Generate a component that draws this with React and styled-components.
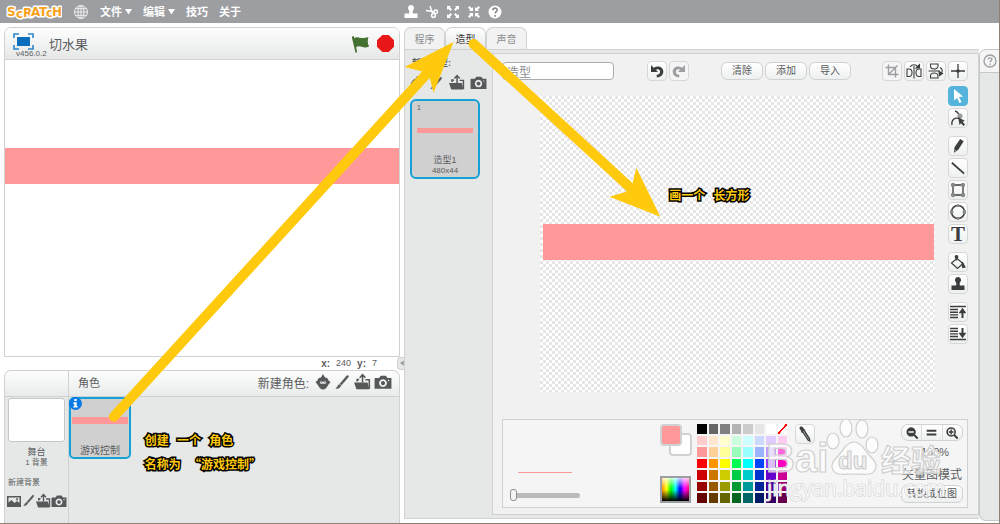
import React from 'react';
import styled, { createGlobalStyle } from 'styled-components';

//styling
const GlobalStyle = createGlobalStyle`
    * {
        box-sizing: border-box;
    }
    body {
        margin: 0;
        background: #fff;
        color: #5c5d5f;
        font-family: "Liberation Sans", "Noto Sans CJK SC", sans-serif;
        font-size: 12px;
    }
    button, input {
        font-family: inherit;
        margin: 0;
        padding: 0;
    }
`

const Page = styled.div`
    position: relative;
    display: flex;
    flex-direction: column;
    min-height: 100vh;
    border-bottom: 1px solid #8d8273;
    border-right: 1px solid #8d8273;
`

const TopBar = styled.header`
    display: flex;
    align-items: center;
    height: 23px;
    padding-left: 6px;
    background: #9c9ea2;
    color: #fff;
`

const TopLeft = styled.nav`
    display: flex;
    align-items: center;
    flex: 0 0 40%;
    gap: 11px;
    svg {
        display: block;
    }
`

const TopTools = styled.div`
    display: flex;
    gap: 5px;
`

const PlainButton = styled.button`
    display: flex;
    align-items: center;
    justify-content: center;
    border: 0;
    background: none;
    color: inherit;
    svg {
        display: block;
    }
`

const MenuButton = styled(PlainButton)`
    gap: 3px;
    font-size: 11px;
    font-weight: bold;
    line-height: 16px;
`

const Workspace = styled.main`
    display: flex;
    flex: 1;
    padding: 4px 0 0 4px;
`

const LeftColumn = styled.section`
    display: flex;
    flex-direction: column;
    flex: 396 1 0;
    min-width: 0;
    margin-right: 4px;
`

const Player = styled.div`
    border: 1px solid #cfd1d2;
    border-radius: 7px 7px 0 0;
    overflow: hidden;
`

const PlayerHeader = styled.div`
    display: flex;
    align-items: center;
    height: 32px;
    padding: 0 5px 0 8px;
    border-bottom: 1px solid #cfd1d2;
    background: linear-gradient(#fdfdfd, #e6e8e8);
`

const FullScreen = styled.div`
    display: flex;
    flex-direction: column;
    width: 36px;
    padding-top: 4px;
    font-size: 8px;
    line-height: 8px;
    span {
        padding-left: 3px;
    }
`

const ProjectTitle = styled.h1`
    flex: 1;
    margin: 0;
    font-size: 13px;
    font-weight: normal;
`

const PlayerControls = styled.div`
    display: flex;
    gap: 8px;
`

const Stage = styled.div`
    aspect-ratio: 4 / 3;
    padding-top: 22.4%;
    background: #fff;
`

const Bar = styled.div`
    height: ${pr => pr.$height}px;
    background: #ff9999;
`

const Coordinates = styled.div`
    display: flex;
    justify-content: flex-end;
    align-items: center;
    gap: 6px;
    height: 13px;
    font-size: 9px;
    b {
        font-size: 10px;
    }
`

const Collapse = styled(PlainButton)`
    width: 8px;
    height: 13px;
    margin: 0 -5px 0 14px;
    border: 1px solid #d0d1d2;
    border-right: 0;
    border-radius: 4px 0 0 4px;
    background: #e6e8e8;
    color: #9c9ea2;
`

const SpritePanel = styled.div`
    display: grid;
    grid-template-columns: 64px 1fr;
    grid-template-rows: 26px 1fr;
    flex: 1;
    border: 1px solid #cfd1d2;
    border-bottom: 0;
    border-radius: 7px 7px 0 0;
    background: #e6e8e8;
    overflow: hidden;
`

const SpriteHeader = styled.div`
    display: flex;
    align-items: center;
    padding: 0 7px 2px 9px;
    border-bottom: 1px solid #d0d1d2;
    border-right: ${pr => (pr.$divided ? '1px solid #d0d1d2' : '0')};
    background: linear-gradient(#fdfdfd, #e9ebeb);
    span {
        margin-right: auto;
        font-size: 11px;
    }
    label {
        margin-right: 6px;
    }
`

const IconRow = styled.div`
    display: flex;
    align-items: center;
    gap: ${pr => pr.$gap || 0}px;
    color: #57585a;
`

const StageColumn = styled.div`
    display: flex;
    flex-direction: column;
    align-items: center;
    border-right: 1px solid #d0d1d2;
    padding-top: 1px;
    font-size: 9px;
    line-height: 12px;
    small {
        font-size: 8px;
        line-height: 10px;
    }
    p {
        width: 100%;
        margin: 9px 0 4px;
        padding-left: 3px;
        font-size: 8px;
    }
`

const StageThumb = styled.div`
    width: 57px;
    height: 44px;
    margin-bottom: 4px;
    border: 1px solid #c4c6c8;
    border-radius: 3px;
    background: #fff;
`

const SpriteCard = styled.div`
    position: relative;
    display: flex;
    flex-direction: column;
    width: 62px;
    height: 62px;
    border: 2px solid #179fd7;
    border-radius: 5px;
    padding: 18px 1px 0;
    background: #d0d0d0;
    font-size: 10px;
    line-height: 12px;
    text-align: center;
    span {
        margin-top: auto;
    }
`

const InfoBadge = styled(PlainButton)`
    position: absolute;
    top: -2px;
    left: -2px;
`

const RightColumn = styled.section`
    display: flex;
    flex-direction: column;
    flex: 575 1 0;
    min-width: 0;
    margin-bottom: 4px;
`

const Tabs = styled.div`
    display: flex;
    height: 22px;
`

const Tab = styled.button`
    width: 41px;
    border: 1px solid #d0d1d2;
    border-bottom: 0;
    border-radius: 7px 7px 0 0;
    background: ${pr => (pr.$active ? 'linear-gradient(#fff, #e6e8e8)' : '#f2f2f2')};
    color: ${pr => (pr.$active ? '#333' : '#8d8e90')};
    font-size: 10px;
`

const EditorPanel = styled.div`
    display: flex;
    flex: 1;
    border: 1px solid #d0d1d2;
    border-width: 1px 0 1px 1px;
    padding: 3px 0;
    background: #e6e8e8;
`

const CostumeList = styled.div`
    flex: 0 0 87px;
    min-width: 0;
    padding: 4px 5px;
    font-size: 9px;
    p {
        margin: 0 0 5px;
        padding-left: 2px;
        font-weight: bold;
        line-height: 12px;
    }
`

const CostumeCard = styled.div`
    display: flex;
    flex-direction: column;
    width: 70px;
    height: 80px;
    margin-top: 8px;
    border: 2px solid #179fd7;
    border-radius: 6px;
    padding: 2px 5px 0;
    background: #d0d0d0;
    line-height: 12px;
    text-align: center;
    small {
        height: 25px;
        font-size: 7px;
        line-height: 10px;
        text-align: left;
    }
    span {
        margin-top: 21px;
    }
    em {
        font-size: 8px;
        font-style: normal;
        line-height: 10px;
    }
`

const Editor = styled.div`
    display: flex;
    flex-direction: column;
    flex: 1;
    min-width: 0;
    border: 1px solid #d0d1d2;
    padding: 7px 10px 6px 9px;
    background: #f1f1f1;
`

const EditorTop = styled.div`
    display: flex;
    align-items: center;
    gap: 2px;
    height: 20px;
`

const NameInput = styled.input`
    width: 112px;
    height: 18px;
    margin-right: auto;
    border: 1px solid #a9abad;
    border-radius: 4px;
    padding: 0 4px;
    background: #fff;
    color: #8d8e90;
    font-size: 12px;
`

const Actions = styled.div`
    display: flex;
    gap: 2px;
    margin: 0 29px 0 30px;
`

const PillButton = styled.button`
    width: ${pr => pr.$width || 42}px;
    height: 18px;
    border: 1px solid #d0d1d2;
    border-radius: 6px;
    background: linear-gradient(#fff, #eef0f0);
    color: #57585a;
    font-size: 10px;
    line-height: 14px;
`

const ToolButton = styled(PlainButton)`
    width: 20px;
    height: 20px;
    border: 1px solid ${pr => (pr.$active ? '#55b4dc' : '#d6d8d8')};
    border-radius: 4px;
    background: ${pr => (pr.$active ? '#55b4dc' : 'linear-gradient(#fff, #eef0f0)')};
    color: ${pr => (pr.$active ? '#fff' : '#3c3d3f')};
    &:disabled {
        color: #9c9ea2;
        background: #f5f5f5;
    }
`

const EditorBody = styled.div`
    display: flex;
    gap: 13px;
    padding: 5px 0 0 38px;
`

const Canvas = styled.div`
    flex: 1;
    align-self: flex-start;
    aspect-ratio: 4 / 3;
    margin-top: 10px;
    padding: 30% 1px 0 3px;
    background: conic-gradient(#e6e6e6 25%, #fff 0 50%, #e6e6e6 0 75%, #fff 0) 0 0 / 6px 6px;
`

const Tools = styled.div`
    display: flex;
    flex-direction: column;
    gap: 8px;
    div {
        display: flex;
        flex-direction: column;
        gap: 2px;
    }
`

const PaintOptions = styled.div`
    position: relative;
    display: flex;
    align-items: flex-start;
    height: 89px;
    margin-top: auto;
    border: 1px solid #d0d1d2;
    padding: 4px;
    background: #f5f5f5;
`

const LineWidth = styled.div`
    width: 70px;
    margin: 48px auto 0 3px;
    hr {
        width: 54px;
        margin: 0 0 15px 8px;
        border: 0;
        border-top: 1px solid #ff9999;
    }
    input {
        display: block;
        width: 100%;
        height: 14px;
        appearance: none;
        background: none;
    }
    input::-webkit-slider-runnable-track {
        height: 5px;
        border-radius: 3px;
        background: #b9bbbd;
    }
    input::-webkit-slider-thumb {
        appearance: none;
        width: 7px;
        height: 12px;
        margin-top: -4px;
        border: 1px solid #8d8e90;
        border-radius: 3px;
        background: #f5f5f5;
    }
`

const ColorColumn = styled.div`
    display: flex;
    flex-direction: column;
    justify-content: space-between;
    width: 32px;
    height: 79px;
    margin-right: 5px;
`

const Swatches = styled.div`
    display: grid;
    grid-template-columns: repeat(32, 1px);
    grid-template-rows: repeat(32, 1px);
`

const Swatch = styled.button`
    grid-area: ${pr => (pr.$front ? '1 / 1 / 23 / 23' : '10 / 10 / 33 / 33')};
    z-index: ${pr => (pr.$front ? 1 : 0)};
    border: 2px solid #d0d1d2;
    border-radius: 4px;
    background: ${pr => pr.$color};
`

const Spectrum = styled.button`
    width: 31px;
    height: 27px;
    border: 2px solid #9c9ea2;
    background:
        linear-gradient(rgba(255, 255, 255, 0.8), rgba(255, 255, 255, 0) 45%, rgba(0, 0, 0, 0) 50%, #000),
        linear-gradient(to right, #ff9000, #ff0, #0f0, #0ff, #00f, #f0f, #ff0080);
`

const Palette = styled.div`
    display: grid;
    grid-template-columns: repeat(8, 1fr);
    gap: 2px;
    width: 90px;
    height: 79px;
    margin-right: 8px;
`

const PaletteCell = styled.button`
    border: 0;
    background: ${pr => pr.$color};
`

const ZoomColumn = styled.div`
    display: flex;
    flex-direction: column;
    align-items: center;
    width: 62px;
    margin-left: 86px;
    font-size: 11px;
    line-height: 14px;
    output {
        margin: 4px 0 9px;
        padding-left: 6px;
    }
    strong {
        margin-bottom: 3px;
        font-size: 12px;
        font-weight: normal;
        white-space: nowrap;
    }
`

const ZoomGroup = styled.div`
    display: flex;
    width: 62px;
    height: 17px;
    border: 1px solid #d0d1d2;
    border-radius: 7px;
    background: linear-gradient(#fff, #eef0f0);
    color: #3c3d3f;
    button {
        flex: 1;
    }
    button + button {
        border-left: 1px solid #dcdede;
    }
`

const Watermark = styled.svg`
    position: absolute;
    right: 21px;
    bottom: 0;
    pointer-events: none;
`

const HelpStrip = styled.aside`
    flex: 0 0 20px;
    margin: 22px 0 2px;
    border: 1px solid #c6c8c9;
    border-right: 0;
    border-radius: 7px 0 0 7px;
    background: #e6e8e8;
    overflow: hidden;
    button {
        width: 100%;
        height: 23px;
        border-bottom: 1px solid #c6c8c9;
        background: #f5f5f5;
        color: #9c9ea2;
    }
`

const Arrows = styled.svg`
    position: absolute;
    top: 0;
    left: 0;
    width: 100%;
    pointer-events: none;
`

const Note = styled.p`
    position: absolute;
    left: ${pr => pr.$left}%;
    top: ${pr => pr.$top}px;
    margin: 0;
    color: #ffc90e;
    font-family: "Noto Sans CJK SC", sans-serif;
    font-size: 12px;
    font-weight: bold;
    line-height: 24px;
    white-space: pre;
    -webkit-text-stroke: 3px #000;
    paint-order: stroke fill;
`

const palette = [
    '#000000', '#666666', '#808080', '#b3b3b3', '#cccccc', '#e6e6e6', '#ffffff', 'none',
    '#ffcccc', '#ffe6cc', '#ffffcc', '#ccffdd', '#ccffff', '#ccd9ff', '#e0ccff', '#ffccf2',
    '#ff9999', '#ffd199', '#ffff99', '#99ffbb', '#99ffff', '#99b3ff', '#c299ff', '#ff66dd',
    '#ff0000', '#ff9400', '#ffff00', '#00ff55', '#00ffff', '#0044ff', '#8c33ff', '#ff00bf',
    '#cc0000', '#cc7700', '#cccc00', '#00cc44', '#00cccc', '#0033cc', '#6600cc', '#cc0099',
    '#990000', '#995900', '#999900', '#009933', '#009999', '#002699', '#4c0099', '#990073',
    '#660000', '#663b00', '#666600', '#006622', '#006666', '#001a66', '#330066', '#66004d',
]

//********************************************* */
// icons
const shapes = {
    globe: <g fill="none" stroke="#eee"><circle cx="8" cy="8" r="6.5" /><ellipse cx="8" cy="8" rx="3" ry="6.5" /><path d="M8 1.5v13M1.5 8h13M2.5 4.7h11M2.5 11.3h11" /></g>,
    stamp: <path d="M8 1a3 3 0 0 1 2.300 5C9.500 7 9.500 8.500 10 9.500h4.500V14h-13V9.500H6c.5-1 .5-2.500-.3-3.500A3 3 0 0 1 8 1z" />,
    scissors: <g fill="none" stroke="currentColor" strokeWidth="1.500"><path d="M6 2l2.500 7M2 6.500l8 1.200" /><circle cx="11.800" cy="7.800" r="1.700" /><circle cx="9.500" cy="11.500" r="1.900" /></g>,
    grow: <g><path d="M2 2h4L4.800 3.200 7 5.500 5.500 7 3.200 4.800 2 6zM14 2v4l-1.200-1.200L10.500 7 9 5.500l2.200-2.300L10 2zM2 14v-4l1.200 1.200L5.500 9 7 10.500l-2.200 2.300L6 14zM14 14h-4l1.200-1.200L9 10.500 10.500 9l2.300 2.200L14 10z" /></g>,
    shrink: <g><path d="M7 7H3l1.200-1.200L2 3.500 3.500 2l2.300 2.200L7 3zM9 7V3l1.200 1.200L12.500 2 14 3.500l-2.200 2.300L13 7zM7 9v4l-1.200-1.200L3.500 14 2 12.500l2.200-2.300L3 9zM9 9h4l-1.200 1.200 2.200 2.300-1.500 1.500-2.300-2.200L9 13z" /></g>,
    help: <g><circle cx="8" cy="8" r="6.500" /><path d="M5.800 6.200C6 3.400 10.300 3.600 10.200 6c0 1.600-2 1.700-2.100 3.400M8 11v1.700" fill="none" stroke="#85878b" strokeWidth="1.600" /></g>,
    helpLine: <g fill="none" stroke="currentColor" strokeWidth="1.300"><circle cx="8" cy="8" r="6" /><path d="M6 6.500C6.200 4.200 10 4.400 9.900 6.400c0 1.400-1.800 1.500-1.900 2.800M8 10.500v1.500" /></g>,
    sprite: <g><path d="M8 0l2 3.500c2 0 3 1 3.500 3l2 1.500-2.300 3C12 13.500 10 15.500 8 15.500S4 13.500 2.800 11L.5 8l2-1.500c.5-2 1.500-3 3.500-3z" /><path d="M4.800 8c1-1.500 2.200.2 3.200-.500 1 .5 2.200-1 3.200.500-.2 2-1.400 2.500-3.200 1.500-1.800 1-3 .5-3.200-1.500z" fill="#e6e8e8" /><path d="M6.200 7.700v1M9.800 7.700v1" stroke="currentColor" /></g>,
    brush: <path d="M14 1.500c.8.600.6 1.200.2 1.800L7.500 11 6 9.800 12.500 2c.5-.5 1-.8 1.500-.5zM5.500 10.300L7 11.500c-1 2.500-3 3-5 3 1.500-1.200 1.500-3.200 3.500-4.200z" stroke="currentColor" strokeWidth="0.500" />,
    folder: <g><path d="M1 8.500h12l1.500 6H3zM3 7.500V5h2.500v1.500H4.500v1z" /><path d="M8.500 8.500V2M6 4.200l2.500-2.700L11 4.200" fill="none" stroke="currentColor" strokeWidth="1.400" /><path d="M11 6h3.500v8" fill="none" stroke="currentColor" strokeWidth="1.400" /></g>,
    camera: <path fillRule="evenodd" d="M1 4.500h3.500L6 2.500h4.500L12 4.500h3.500v9.500H.5V5zM8 5.500a3.500 3.500 0 1 0 .01 0zM8 7.200a1.800 1.800 0 1 1-.01 0zM13 6a.6.6 0 1 0 .01 0z" />,
    picture: <path fillRule="evenodd" d="M1 3h14v11H1zM2.500 4.500v5l3-2.500 3 3 2.500-2 2.500 2V4.500zM11 5.200a1 1 0 1 0 .01 0z" />,
    undo: <path d="M2 2v7h7L6.800 6.800c2.400-1.200 4.300-.3 4.300 1.900 0 1.700-1.400 2.900-3.600 3.300L8 14.500c4-.3 6.500-2.800 6.300-6.200C14 4 9 2 4.800 4.800z" />,
    redo: <path d="M14 2v7H7l2.200-2.200c-2.400-1.200-4.300-.3-4.300 1.900 0 1.700 1.400 2.900 3.600 3.300L8 14.500c-4-.3-6.500-2.800-6.300-6.200C2 4 7 2 11.200 4.800z" />,
    crop: <path d="M4.500 1.500v10h10M1.500 4.500h10v10M13.500 2.500l-9 9" fill="none" stroke="currentColor" strokeWidth="1.400" />,
    flipH: <g fill="none" stroke="currentColor" strokeWidth="1.100"><path d="M1 6h2c4 0 4 7.500 0 7.500H1zM15 6h-2c-4 0-4 7.500 0 7.500h2zM8 3v12.500M4 4c2-3 6-3 8 0" /><path d="M13.500 1.500v3.500H10z" fill="currentColor" /></g>,
    flipV: <g fill="none" stroke="currentColor" strokeWidth="1.100"><path d="M2.500 1v2c0 4 7.500 4 7.500 0V1zM2.500 15v-2c0-4 7.500-4 7.500 0v2zM.5 8H12M12 4.500c3 1.500 3 5 0 7" /><path d="M11 8.500l.5 4 3-2z" fill="currentColor" /></g>,
    center: <g><path d="M8 1v14M1 8h14" stroke="currentColor" strokeWidth="1.300" /><circle cx="8" cy="8" r="1.800" /></g>,
    arrow: <path d="M4 1l9 7.500-4 .4 2.500 5-2 1-2.400-5L4 12.500z" />,
    reshape: <g><path d="M2 15c-1-5 3-8 7-6.500M5 1c4 1 3 3 5 5" fill="none" stroke="currentColor" strokeWidth="1.300" /><circle cx="10" cy="6" r="2.500" fill="#999" /><path d="M8 7l7 4-2.500.8L15 14.500 13.500 16 11 13.200 9.500 15z" /></g>,
    pencil: <path d="M10.500 0l4 2.500L8.500 12 4 15.500 3.500 16 4 9.500zM4.800 14l1.200-.8-1-.8z" />,
    line: <path d="M1 2l14 12.500" stroke="currentColor" strokeWidth="2" />,
    rect: <g><path d="M3 3h10v10H3z" fill="none" stroke="currentColor" strokeWidth="1.300" /><g fill="#888"><circle cx="3" cy="3" r="2.200" /><circle cx="13" cy="3" r="2.200" /><circle cx="3" cy="13" r="2.200" /><circle cx="13" cy="13" r="2.200" /></g></g>,
    ellipse: <g><circle cx="8" cy="8" r="6.500" fill="none" stroke="currentColor" strokeWidth="1.500" /><g fill="#888"><circle cx="8" cy="1.500" r="1.500" /><circle cx="1.500" cy="8" r="2" /><circle cx="14.500" cy="8" r="2" /><circle cx="8" cy="14.500" r="1.500" /></g></g>,
    fill: <g fill="none" stroke="currentColor" strokeWidth="1.200"><path d="M7 4.500l6 5-5.500 5-6-5.500zM6.500 1.500v5" /><circle cx="6.500" cy="3" r="1.300" fill="currentColor" /><path d="M12 8l3 5-2.200.5z" fill="currentColor" /></g>,
    forward: <g stroke="currentColor" strokeWidth="1.400"><path d="M0 2.500h16M0 5.500h8M0 8.200h8M0 10.900h8M0 13.500h8" /><path d="M12.500 14V7" strokeWidth="2" /><path d="M10 8.500L12.500 5 15 8.500z" /></g>,
    back: <g stroke="currentColor" strokeWidth="1.400"><path d="M0 13.500h16M0 2.500h8M0 5.200h8M0 7.900h8M0 10.500h8" /><path d="M12.500 2v6" strokeWidth="2" /><path d="M10 7.500l2.500 3.500L15 7.500z" /></g>,
    dropper: <g><path d="M3 .8c1.800-1 3.600.2 3.800 2.200l1.600.7-.8 1.600L5 7l-1-1 .2-1.300C2.600 3.800 2 1.800 3 .8z" /><path d="M5.500 5.500l5.500 8.500 1.800 1-.3-2.200-5-8" fill="#aaa" stroke="currentColor" strokeWidth="1.300" /></g>,
    zoomOut: <g><path fillRule="evenodd" d="M7 1.500a5.300 5.300 0 1 0 .01 0zM4 6h6v1.700H4z" /><path d="M10.500 10.300l4 4" stroke="currentColor" strokeWidth="2.200" /></g>,
    zoomIn: <g><path d="M10.500 10.300l4 4" stroke="currentColor" strokeWidth="2.200" /><circle cx="7" cy="6.800" r="4.600" fill="#f8f8f8" stroke="currentColor" strokeWidth="1.800" /><path d="M7 4v5.600M4.200 6.800h5.600" stroke="currentColor" strokeWidth="1.700" /></g>,
    equals: <path d="M1 4h14v3H1zM1 9.500h14v3H1z" />,
    info: <g><circle cx="8" cy="8" r="8" fill="#0a7be6" /><path d="M6.500 2.500h3V5h-3zM5.500 6.500h4V11h1v2h-5v-2h1V8.500h-1z" fill="#fff" /></g>,
    down: <path d="M0 2h16L8 15z" />,
    left: <path d="M13 1v14L2 8z" />,
    flag: <path d="M1.500 2.500L3 1.500l.6 1.800c3-2 5 1.500 11.900-.8-.8 3-.8 5 .5 8-5 2.500-7-1.500-10.800.5L6 15.500H4.600z" fill="#44712f" />,
    stop: <path d="M5 0h6l5 5v6l-5 5H5l-5-5V5z" fill="#e81818" />,
}

function Icon(props) {
    const {name, size = 16} = props;

    return (
        <svg width={size} height={size} viewBox="0 0 16 16" fill="currentColor" aria-hidden="true">
            {shapes[name]}
        </svg>
    )
}

function IconButton(props) {
    const {name, label, size} = props;

    return (
        <PlainButton aria-label={label}><Icon name={name} size={size} /></PlainButton>
    )
}

function Tool(props) {
    const {name, active, disabled} = props;

    return (
        <ToolButton aria-label={name} $active={active} disabled={disabled}>
            <Icon name={name} size={name === 'line' || name === 'pencil' ? 14 : 16} />
        </ToolButton>
    )
}

const TextTool = styled(ToolButton)`
    font-family: "Liberation Serif", serif;
    font-size: 21px;
    font-weight: bold;
    line-height: 18px;
`

function Logo() {
    return (
        <svg width="56" height="20" viewBox="0 0 56 20" role="img" aria-label="Scratch">
            <g fontFamily="DejaVu Sans, sans-serif" fontWeight="bold" fill="#f9a11b" stroke="#fff" strokeWidth="3" strokeLinejoin="round" paintOrder="stroke">
                <text x="1 10 17 25 33 40 46" y="14 16 15 14 14 15 14" fontSize="12">ScRATcH</text>
            </g>
        </svg>
    )
}

function TopMenu() {
    return (
        <TopBar>
            <TopLeft>
                <Logo />
                <IconButton name="globe" label="语言" />
                <MenuButton>文件<Icon name="down" size={7} /></MenuButton>
                <MenuButton>编辑<Icon name="down" size={7} /></MenuButton>
                <MenuButton>技巧</MenuButton>
                <MenuButton>关于</MenuButton>
            </TopLeft>
            <TopTools>
                <IconButton name="stamp" label="复制" />
                <IconButton name="scissors" label="删除" />
                <IconButton name="grow" label="放大" />
                <IconButton name="shrink" label="缩小" />
                <IconButton name="help" label="帮助" />
            </TopTools>
        </TopBar>
    )
}

function StagePlayer() {
    return (
        <Player>
            <PlayerHeader>
                <FullScreen>
                    <svg width="21" height="17" viewBox="0 0 21 17" aria-hidden="true">
                        <rect x="4" y="4" width="13" height="9" fill="#0a6ebd" />
                        <path d="M1 5V1h5M15 1h5v4M20 12v4h-5M6 16H1v-4" fill="none" stroke="#2a86cc" strokeWidth="1.600" />
                    </svg>
                    <span>v456.0.2</span>
                </FullScreen>
                <ProjectTitle>切水果</ProjectTitle>
                <PlayerControls>
                    <IconButton name="flag" label="开始" size={19} />
                    <IconButton name="stop" label="停止" size={17} />
                </PlayerControls>
            </PlayerHeader>
            <Stage><Bar $height={36} /></Stage>
        </Player>
    )
}

function Sprites() {
    return (
        <SpritePanel>
            <SpriteHeader $divided />
            <SpriteHeader>
                <span>角色</span>
                <label>新建角色:</label>
                <IconRow $gap={3}>
                    <IconButton name="sprite" label="选取角色" />
                    <IconButton name="brush" label="绘制角色" />
                    <IconButton name="folder" label="上传角色" size={18} />
                    <IconButton name="camera" label="拍摄角色" size={18} />
                </IconRow>
            </SpriteHeader>
            <StageColumn>
                <StageThumb />
                <span>舞台</span>
                <small>1 背景</small>
                <p>新建背景</p>
                <IconRow>
                    <IconButton name="picture" label="选取背景" />
                    <IconButton name="brush" label="绘制背景" size={13} />
                    <IconButton name="folder" label="上传背景" />
                    <IconButton name="camera" label="拍摄背景" />
                </IconRow>
            </StageColumn>
            <SpriteCard>
                <InfoBadge aria-label="信息"><Icon name="info" size={13} /></InfoBadge>
                <Bar $height={7} />
                <span>游戏控制</span>
            </SpriteCard>
        </SpritePanel>
    )
}

function PaintPanel() {
    return (
        <PaintOptions>
            <LineWidth>
                <hr />
                <input type="range" min="0" max="100" defaultValue="0" aria-label="线宽" />
            </LineWidth>
            <ColorColumn>
                <Swatches>
                    <Swatch $front $color="#ff9999" aria-label="前景色" />
                    <Swatch $color="#fff" aria-label="背景色" />
                </Swatches>
                <Spectrum aria-label="色谱" />
            </ColorColumn>
            <Palette>
                {palette.map((color, i) => (
                    <PaletteCell
                        key={i}
                        aria-label={color}
                        $color={color === 'none' ? 'linear-gradient(to bottom right, #fff 43%, #f00 44% 56%, #fff 57%)' : color}
                    />
                ))}
            </Palette>
            <Tool name="dropper" />
            <ZoomColumn>
                <ZoomGroup>
                    <IconButton name="zoomOut" label="缩小" size={14} />
                    <IconButton name="equals" label="原始大小" size={11} />
                    <IconButton name="zoomIn" label="放大" size={14} />
                </ZoomGroup>
                <output>100%</output>
                <strong>矢量图模式</strong>
                <PillButton $width={62}>转换成位图</PillButton>
            </ZoomColumn>
            <Watermark width="182" height="92" viewBox="0 0 182 92">
                <g fill="#fff" fillOpacity="0.7" stroke="#cfcfcf" strokeWidth="1.200" fontWeight="bold">
                    <text x="2" y="57" fontSize="40" fontFamily="Liberation Sans, sans-serif">Bai</text>
                    <ellipse cx="82" cy="13" rx="6" ry="9" />
                    <ellipse cx="98" cy="14" rx="6" ry="9" />
                    <ellipse cx="69" cy="26" rx="6" ry="8" />
                    <ellipse cx="108" cy="30" rx="6" ry="8" />
                    <path d="M90 27c7 0 10 7 15 13 5 5 9 9 6 15-3 6-12 4-21 4s-18 2-21-4c-3-6 1-10 6-15 5-6 8-13 15-13z" />
                    <text x="74" y="54" fontSize="24" fontFamily="Liberation Sans, sans-serif" fill="#eee">du</text>
                    <text x="117" y="56" fontSize="30" fontFamily="Noto Sans CJK SC, sans-serif">经验</text>
                </g>
                <text x="3" y="81" fontSize="21" fontFamily="Open Sans, sans-serif" fill="#fff" fillOpacity="0.8" stroke="#d4d4d4" strokeWidth="1.200" paintOrder="stroke">jingyan.baidu.com</text>
            </Watermark>
        </PaintOptions>
    )
}

function CostumeEditor() {
    return (
        <Editor>
            <EditorTop>
                <NameInput aria-label="造型名称" defaultValue="造型" />
                <Tool name="undo" />
                <Tool name="redo" disabled />
                <Actions>
                    <PillButton>清除</PillButton>
                    <PillButton>添加</PillButton>
                    <PillButton>导入</PillButton>
                </Actions>
                <Tool name="crop" disabled />
                <Tool name="flipH" />
                <Tool name="flipV" />
                <Tool name="center" />
            </EditorTop>
            <EditorBody>
                <Canvas><Bar $height={36} /></Canvas>
                <Tools>
                    <div><Tool name="arrow" active /><Tool name="reshape" /></div>
                    <div>
                        <Tool name="pencil" />
                        <Tool name="line" />
                        <Tool name="rect" />
                        <Tool name="ellipse" />
                        <TextTool aria-label="text">T</TextTool>
                    </div>
                    <div><Tool name="fill" /><Tool name="stamp" /></div>
                    <div><Tool name="forward" /><Tool name="back" /></div>
                </Tools>
            </EditorBody>
            <PaintPanel />
        </Editor>
    )
}

function App() {
    return (
        <Page>
            <GlobalStyle />
            <TopMenu />
            <Workspace>
                <LeftColumn>
                    <StagePlayer />
                    <Coordinates>
                        <b>x:</b>240
                        <b>y:</b>7
                        <Collapse aria-label="收起"><Icon name="left" size={6} /></Collapse>
                    </Coordinates>
                    <Sprites />
                </LeftColumn>
                <RightColumn>
                    <Tabs>
                        <Tab>程序</Tab>
                        <Tab $active>造型</Tab>
                        <Tab>声音</Tab>
                    </Tabs>
                    <EditorPanel>
                        <CostumeList>
                            <p>新建造型:</p>
                            <IconRow $gap={5}>
                                <IconButton name="sprite" label="选取造型" size={14} />
                                <IconButton name="brush" label="绘制造型" size={14} />
                                <IconButton name="folder" label="上传造型" size={17} />
                                <IconButton name="camera" label="拍摄造型" size={17} />
                            </IconRow>
                            <CostumeCard>
                                <small>1</small>
                                <Bar $height={5} />
                                <span>造型1</span>
                                <em>480x44</em>
                            </CostumeCard>
                        </CostumeList>
                        <CostumeEditor />
                    </EditorPanel>
                </RightColumn>
                <HelpStrip><IconButton name="helpLine" label="帮助" /></HelpStrip>
            </Workspace>
            <Arrows viewBox="0 0 1000 524" fill="#ffc90e" stroke="#ffc90e" aria-hidden="true">
                <path d="M114 417L428 73M474 44L630 187" fill="none" strokeWidth="10" strokeLinecap="round" />
                <path d="M454 42L405 67l20 5 5 5 4 16zM661 217l-51-20 17-5 6-8 4-16z" stroke="none" />
            </Arrows>
            <Note $left={14.5} $top={428}>{'创建   一个   角色\n名称为   “游戏控制”'}</Note>
            <Note $left={67} $top={183}>{'画一个   长方形'}</Note>
        </Page>
    )
}


export default App;
